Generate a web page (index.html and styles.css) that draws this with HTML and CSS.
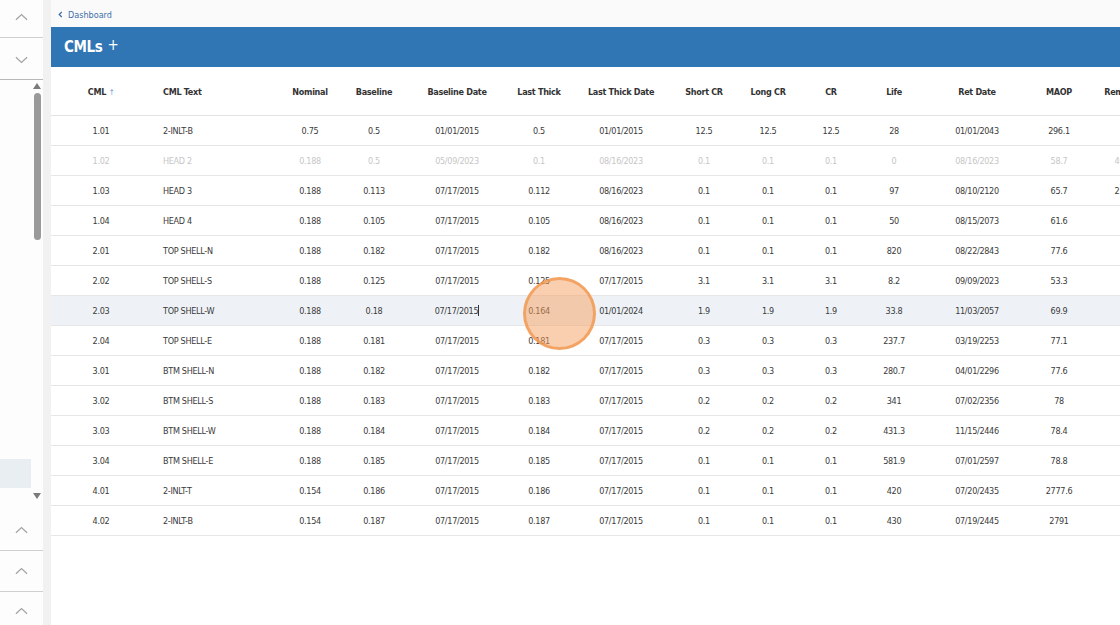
FILE: index.html
```html
<!DOCTYPE html>
<html>
<head>
<meta charset="utf-8">
<link rel="stylesheet" href="styles.css">
</head>
<body>
<aside class="sidebar">
  <div class="nav-btn first"><svg class="chev" viewBox="0 0 14 8"><polyline points="1,7 7,1.5 13,7"/></svg></div>
  <div class="nav-btn second"><svg class="chev" viewBox="0 0 14 8"><polyline points="1,1 7,6.5 13,1"/></svg></div>
  <div class="list">
    <div class="list-items">
      <div class="list-item active"></div>
    </div>
    <div class="scrollbar">
      <svg class="tri" viewBox="0 0 8 6"><polygon points="0,6 4,0 8,6"/></svg>
      <div class="thumb-track"><div class="thumb"></div></div>
      <svg class="tri" viewBox="0 0 8 6"><polygon points="0,0 8,0 4,6"/></svg>
    </div>
  </div>
  <div class="nav-btn bottom"><svg class="chev" viewBox="0 0 14 8"><polyline points="1,7 7,1.5 13,7"/></svg></div>
  <div class="nav-btn bottom"><svg class="chev" viewBox="0 0 14 8"><polyline points="1,7 7,1.5 13,7"/></svg></div>
  <div class="nav-btn bottom last"><svg class="chev" viewBox="0 0 14 8"><polyline points="1,7 7,1.5 13,7"/></svg></div>
</aside>
<div class="gutter"></div>
<main class="main">
  <div class="breadcrumb"><svg class="back" viewBox="0 0 6 8"><polyline points="4.5,1 1.5,4 4.5,7"/></svg><span>Dashboard</span></div>
  <div class="titlebar"><span class="title">CMLs</span><span class="plus">+</span></div>
  <div class="table-wrap">
    <table class="grid">
      <colgroup>
        <col class="w-cml"><col class="w-text"><col class="w-nom"><col class="w-base"><col class="w-bdate"><col class="w-last"><col class="w-ldate"><col class="w-scr"><col class="w-lcr"><col class="w-cr"><col class="w-life"><col class="w-ret"><col class="w-maop"><col class="w-rem">
      </colgroup>
      <thead>
        <tr><th>CML <span class="sort">&#8593;</span></th><th class="left">CML Text</th><th>Nominal</th><th>Baseline</th><th>Baseline Date</th><th>Last Thick</th><th>Last Thick Date</th><th>Short CR</th><th>Long CR</th><th>CR</th><th>Life</th><th>Ret Date</th><th>MAOP</th><th>Rem Life</th></tr>
      </thead>
      <tbody>
        <tr><td>1.01</td><td class="left">2-INLT-B</td><td>0.75</td><td>0.5</td><td>01/01/2015</td><td>0.5</td><td>01/01/2015</td><td>12.5</td><td>12.5</td><td>12.5</td><td>28</td><td>01/01/2043</td><td>296.1</td><td></td></tr>
        <tr class="muted"><td>1.02</td><td class="left">HEAD 2</td><td>0.188</td><td>0.5</td><td>05/09/2023</td><td>0.1</td><td>08/16/2023</td><td>0.1</td><td>0.1</td><td>0.1</td><td>0</td><td>08/16/2023</td><td>58.7</td><td>40.0</td></tr>
        <tr><td>1.03</td><td class="left">HEAD 3</td><td>0.188</td><td>0.113</td><td>07/17/2015</td><td>0.112</td><td>08/16/2023</td><td>0.1</td><td>0.1</td><td>0.1</td><td>97</td><td>08/10/2120</td><td>65.7</td><td>25.3</td></tr>
        <tr><td>1.04</td><td class="left">HEAD 4</td><td>0.188</td><td>0.105</td><td>07/17/2015</td><td>0.105</td><td>08/16/2023</td><td>0.1</td><td>0.1</td><td>0.1</td><td>50</td><td>08/15/2073</td><td>61.6</td><td></td></tr>
        <tr><td>2.01</td><td class="left">TOP SHELL-N</td><td>0.188</td><td>0.182</td><td>07/17/2015</td><td>0.182</td><td>08/16/2023</td><td>0.1</td><td>0.1</td><td>0.1</td><td>820</td><td>08/22/2843</td><td>77.6</td><td></td></tr>
        <tr><td>2.02</td><td class="left">TOP SHELL-S</td><td>0.188</td><td>0.125</td><td>07/17/2015</td><td>0.125</td><td>07/17/2015</td><td>3.1</td><td>3.1</td><td>3.1</td><td>8.2</td><td>09/09/2023</td><td>53.3</td><td></td></tr>
        <tr class="selected"><td>2.03</td><td class="left">TOP SHELL-W</td><td>0.188</td><td>0.18</td><td>07/17/2015<span class="caret"></span></td><td>0.164</td><td>01/01/2024</td><td>1.9</td><td>1.9</td><td>1.9</td><td>33.8</td><td>11/03/2057</td><td>69.9</td><td></td></tr>
        <tr><td>2.04</td><td class="left">TOP SHELL-E</td><td>0.188</td><td>0.181</td><td>07/17/2015</td><td>0.181</td><td>07/17/2015</td><td>0.3</td><td>0.3</td><td>0.3</td><td>237.7</td><td>03/19/2253</td><td>77.1</td><td></td></tr>
        <tr><td>3.01</td><td class="left">BTM SHELL-N</td><td>0.188</td><td>0.182</td><td>07/17/2015</td><td>0.182</td><td>07/17/2015</td><td>0.3</td><td>0.3</td><td>0.3</td><td>280.7</td><td>04/01/2296</td><td>77.6</td><td></td></tr>
        <tr><td>3.02</td><td class="left">BTM SHELL-S</td><td>0.188</td><td>0.183</td><td>07/17/2015</td><td>0.183</td><td>07/17/2015</td><td>0.2</td><td>0.2</td><td>0.2</td><td>341</td><td>07/02/2356</td><td>78</td><td></td></tr>
        <tr><td>3.03</td><td class="left">BTM SHELL-W</td><td>0.188</td><td>0.184</td><td>07/17/2015</td><td>0.184</td><td>07/17/2015</td><td>0.2</td><td>0.2</td><td>0.2</td><td>431.3</td><td>11/15/2446</td><td>78.4</td><td></td></tr>
        <tr><td>3.04</td><td class="left">BTM SHELL-E</td><td>0.188</td><td>0.185</td><td>07/17/2015</td><td>0.185</td><td>07/17/2015</td><td>0.1</td><td>0.1</td><td>0.1</td><td>581.9</td><td>07/01/2597</td><td>78.8</td><td></td></tr>
        <tr><td>4.01</td><td class="left">2-INLT-T</td><td>0.154</td><td>0.186</td><td>07/17/2015</td><td>0.186</td><td>07/17/2015</td><td>0.1</td><td>0.1</td><td>0.1</td><td>420</td><td>07/20/2435</td><td>2777.6</td><td></td></tr>
        <tr><td>4.02</td><td class="left">2-INLT-B</td><td>0.154</td><td>0.187</td><td>07/17/2015</td><td>0.187</td><td>07/17/2015</td><td>0.1</td><td>0.1</td><td>0.1</td><td>430</td><td>07/19/2445</td><td>2791</td><td></td></tr>
      </tbody>
    </table>
    <div class="click-marker"></div>
  </div>
</main>
</body>
</html>
```

FILE: styles.css
```css
* { box-sizing: border-box; }
html, body { margin: 0; padding: 0; }
body {
  width: 1120px;
  height: 625px;
  overflow: hidden;
  display: flex;
  font-family: "DejaVu Sans Condensed", "Roboto", sans-serif;
  background: #fafafa;
  color: #444;
}

/* Sidebar */
.sidebar {
  width: 43px;
  flex: none;
  display: flex;
  flex-direction: column;
  background: #fdfdfd;
}
.nav-btn {
  display: flex;
  align-items: center;
  justify-content: center;
  border-bottom: 1px solid #cfcfcf;
  flex: none;
}
.nav-btn.first { height: 38px; padding-bottom: 3px; }
.nav-btn.second { height: 42px; border-bottom-color: #b8b8b8; padding-top: 2px; }
.nav-btn.bottom { height: 41px; }
.nav-btn.last { height: 33px; border-bottom: none; padding-top: 4px; }
.chev {
  width: 13px;
  height: 8px;
  fill: none;
  stroke: #a3a3a3;
  stroke-width: 1.3;
}
.list {
  flex: 1;
  display: flex;
  min-height: 0;
}
.list-items {
  width: 31px;
  display: flex;
  flex-direction: column;
  justify-content: flex-end;
  padding-bottom: 22px;
}
.list-item.active {
  height: 29px;
  background: #e9eef3;
}
.scrollbar {
  flex: 1;
  display: flex;
  flex-direction: column;
  align-items: center;
  padding: 3px 0 11px;
  gap: 4px;
}
.tri { width: 8px; height: 6px; fill: #7b7b7b; flex: none; }
.thumb-track { flex: 1; width: 8px; }
.thumb {
  width: 7px;
  margin: 0 auto;
  height: 147px;
  background: #9a9a9a;
  border-radius: 4px;
}

.gutter {
  width: 8px;
  flex: none;
  background: #f1f1f1;
}

/* Main */
.main {
  flex: 1;
  min-width: 0;
  display: flex;
  flex-direction: column;
  overflow: hidden;
}
.breadcrumb {
  height: 27px;
  flex: none;
  display: flex;
  align-items: center;
  padding-left: 7px;
  padding-top: 2px;
  gap: 5px;
  color: #3d6fa8;
  font-size: 9px;
}
.back {
  width: 5px;
  height: 7px;
  fill: none;
  stroke: #3d6fa8;
  stroke-width: 1.5;
}
.titlebar {
  height: 40px;
  flex: none;
  background: #3075b4;
  color: #fff;
  display: flex;
  align-items: center;
  padding-left: 13px;
  gap: 5px;
}
.title { font-size: 15px; font-weight: bold; letter-spacing: -0.4px; }
.plus { font-size: 15px; line-height: 1; margin-top: -3px; }

.table-wrap {
  flex: 1;
  background: #fff;
  position: relative;
  overflow: hidden;
}
.grid {
  border-collapse: collapse;
  table-layout: fixed;
  width: 1107px;
}
.w-cml { width: 100px; }
.w-text { width: 129px; }
.w-nom { width: 60px; }
.w-base { width: 68px; }
.w-bdate { width: 98px; }
.w-last { width: 66px; }
.w-ldate { width: 98px; }
.w-scr { width: 68px; }
.w-lcr { width: 60px; }
.w-cr { width: 66px; }
.w-life { width: 60px; }
.w-ret { width: 106px; }
.w-maop { width: 58px; }
.w-rem { width: 70px; }

.grid th {
  height: 48px;
  font-size: 9px;
  font-weight: bold;
  letter-spacing: -0.3px;
  color: #333;
  text-align: center;
  white-space: nowrap;
  padding: 3px 0 0;
  border-bottom: 1px solid #e3e3e3;
}
.grid td {
  height: 30px;
  font-size: 9px;
  letter-spacing: -0.3px;
  color: #3a3a3a;
  text-align: center;
  white-space: nowrap;
  padding: 1px 0 0;
  border-bottom: 1px solid #e6e6e6;
}
.grid .left { text-align: left; padding-left: 12px; }
.sort { color: #6b9bd2; font-size: 8px; font-weight: normal; }
.grid tr.muted td { color: #c6c6c6; }
.grid tr.selected td { background: #eef2f6; }
.caret {
  display: inline-block;
  width: 1px;
  height: 11px;
  background: #333;
  vertical-align: -2px;
}

.click-marker {
  position: absolute;
  left: 472px;
  top: 210px;
  width: 73px;
  height: 73px;
  border-radius: 50%;
  background: rgba(245, 160, 95, 0.5);
  border: 3px solid rgba(240, 150, 75, 0.75);
}
```
